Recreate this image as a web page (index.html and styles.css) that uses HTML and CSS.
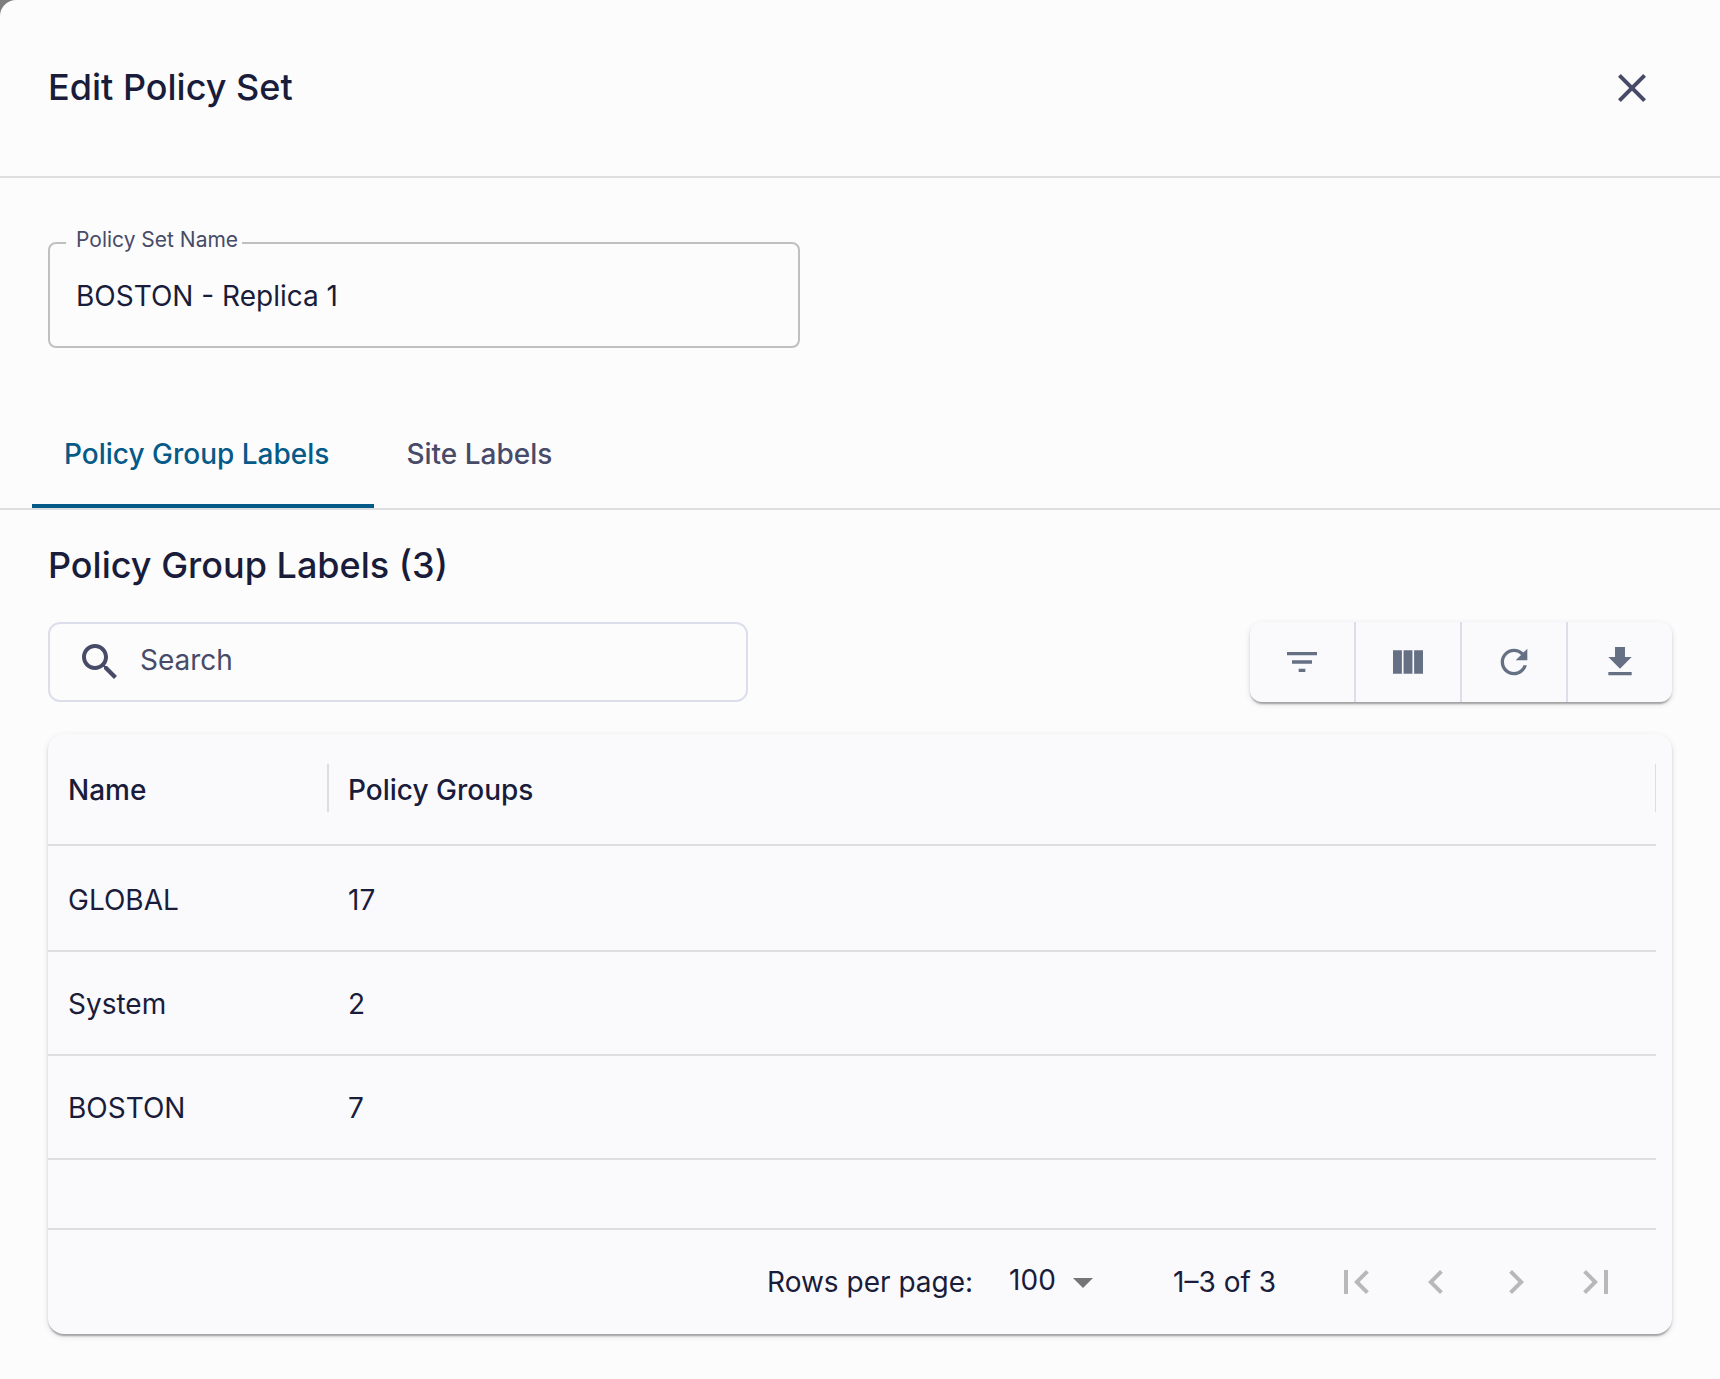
FILE: index.html
```html
<!DOCTYPE html>
<html lang="en">
<head>
<meta charset="utf-8">
<meta name="viewport" content="width=device-width, initial-scale=1">
<title>Edit Policy Set</title>
<link rel="stylesheet" href="styles.css">
</head>
<body>
<main class="panel">
  <header class="panel-header">
    <h1 class="title">Edit Policy Set</h1>
    <button class="icon-button close-button" type="button" aria-label="Close">
      <svg class="icon" viewBox="0 0 24 24"><path d="M19 6.41 17.59 5 12 10.59 6.41 5 5 6.41 10.59 12 5 17.59 6.41 19 12 13.41 17.59 19 19 17.59 13.41 12z"/></svg>
    </button>
  </header>

  <div class="form">
    <div class="field">
      <label class="field-label" for="policy-set-name">Policy Set Name</label>
      <input class="field-input" id="policy-set-name" type="text" value="BOSTON - Replica 1">
    </div>
  </div>

  <div class="tabs" role="tablist">
    <button class="tab tab-active" type="button" role="tab" aria-selected="true">Policy Group Labels</button>
    <button class="tab" type="button" role="tab" aria-selected="false">Site Labels</button>
  </div>

  <section class="content">
    <h2 class="title">Policy Group Labels (3)</h2>

    <div class="toolbar">
      <div class="search">
        <svg class="icon" viewBox="0 0 24 24"><path d="M15.5 14h-.79l-.28-.27C15.41 12.59 16 11.11 16 9.5 16 5.91 13.09 3 9.5 3S3 5.91 3 9.5 5.91 16 9.5 16c1.61 0 3.09-.59 4.23-1.57l.27.28v.79l5 4.99L20.49 19l-4.99-5zm-6 0C7.01 14 5 11.99 5 9.5S7.01 5 9.5 5 14 7.01 14 9.5 11.99 14 9.5 14z"/></svg>
        <input class="search-input" type="search" placeholder="Search" aria-label="Search">
      </div>
      <div class="actions">
        <button class="action" type="button" aria-label="Filter">
          <svg class="action-icon" viewBox="0 0 24 24"><path d="M10 18h4v-2h-4v2zM3 6v2h18V6H3zm3 7h12v-2H6v2z"/></svg>
        </button>
        <button class="action" type="button" aria-label="Columns">
          <svg class="action-icon" viewBox="0 0 24 24"><path d="M14.67 5v14H9.33V5h5.34zm1 14H21V5h-5.33v14zm-7.34 0V5H3v14h5.33z"/></svg>
        </button>
        <button class="action" type="button" aria-label="Refresh">
          <svg class="action-icon" viewBox="0 0 24 24"><path d="M17.65 6.35C16.2 4.9 14.21 4 12 4c-4.42 0-7.99 3.58-7.99 8s3.57 8 7.99 8c3.73 0 6.84-2.55 7.73-6h-2.08c-.82 2.33-3.04 4-5.65 4-3.31 0-6-2.69-6-6s2.69-6 6-6c1.66 0 3.14.69 4.22 1.78L13 11h7V4l-2.35 2.35z"/></svg>
        </button>
        <button class="action" type="button" aria-label="Download">
          <svg class="action-icon" viewBox="0 0 24 24"><path d="M19 9h-4V3H9v6H5l7 7 7-7zM5 18v2h14v-2H5z"/></svg>
        </button>
      </div>
    </div>

    <div class="card">
      <div class="grid">
        <table class="table">
          <thead>
            <tr><th class="col-name" scope="col">Name</th><th scope="col">Policy Groups</th></tr>
          </thead>
          <tbody>
            <tr><td>GLOBAL</td><td>17</td></tr>
            <tr><td>System</td><td>2</td></tr>
            <tr><td>BOSTON</td><td>7</td></tr>
          </tbody>
        </table>
      </div>
      <footer class="pagination">
        <label class="rows-label" for="rows-per-page">Rows per page:</label>
        <div class="rows">
          <select class="rows-select" id="rows-per-page">
            <option>25</option>
            <option>50</option>
            <option selected>100</option>
          </select>
          <svg class="icon rows-arrow" viewBox="0 0 24 24"><path d="m7 10 5 5 5-5z"/></svg>
        </div>
        <span class="range">1–3 of 3</span>
        <div class="pages">
          <button class="icon-button page-button" type="button" disabled aria-label="First page">
            <svg class="icon" viewBox="0 0 24 24"><path d="M18.41 16.59 13.82 12l4.59-4.59L17 6l-6 6 6 6zM6 6h2v12H6z"/></svg>
          </button>
          <button class="icon-button page-button" type="button" disabled aria-label="Previous page">
            <svg class="icon" viewBox="0 0 24 24"><path d="M15.41 7.41 14 6l-6 6 6 6 1.41-1.41L10.83 12z"/></svg>
          </button>
          <button class="icon-button page-button" type="button" disabled aria-label="Next page">
            <svg class="icon" viewBox="0 0 24 24"><path d="M10 6 8.59 7.41 13.17 12l-4.58 4.59L10 18l6-6z"/></svg>
          </button>
          <button class="icon-button page-button" type="button" disabled aria-label="Last page">
            <svg class="icon" viewBox="0 0 24 24"><path d="M5.59 7.41 10.18 12l-4.59 4.59L7 18l6-6-6-6zM16 6h2v12h-2z"/></svg>
          </button>
        </div>
      </footer>
    </div>
  </section>
</main>
</body>
</html>
```
FILE: styles.css
```css
:root {
  --ink: #191c3a;
  --muted: #484b68;
  --accent: #055a87;
  --line: #dedee0;
  --outline: #dcdeec;
  --surface: #fafafd;
  --raised: 0 4px 2px -2px rgba(0, 0, 0, .2), 0 2px 2px rgba(0, 0, 0, .14), 0 2px 6px rgba(0, 0, 0, .12);
}

*,
*::before,
*::after {
  box-sizing: border-box;
}

body {
  margin: 0;
  background: #7e7e7e;
  color: var(--ink);
  font: 400 28px/40px Inter, "Liberation Sans", sans-serif;
}

button,
input,
select {
  margin: 0;
  padding: 0;
  border: 0;
  background: none;
  color: inherit;
  font: inherit;
  outline: 0;
}

.panel {
  min-height: 100vh;
  background: #fcfcfc;
  border-top-left-radius: 16px;
}

.title {
  margin: 0;
  font-size: 36px;
  line-height: 44px;
  font-weight: 500;
}

.icon {
  display: block;
  flex: none;
  width: 48px;
  height: 48px;
  fill: currentColor;
}

.icon-button {
  padding: 16px;
}

.panel-header {
  display: flex;
  align-items: center;
  justify-content: space-between;
  padding: 48px;
  border-bottom: 2px solid var(--line);
}

.panel-header .title {
  padding-bottom: 2px;
}

.close-button {
  color: var(--muted);
}

/* Form */

.form {
  padding: 64px 48px 52px;
}

.field {
  position: relative;
  max-width: 752px;
}

.field-label {
  position: absolute;
  top: -18px;
  left: 18px;
  padding: 0 4px 0 10px;
  background: #fcfcfc;
  color: var(--muted);
  font-size: 21px;
  line-height: 32px;
}

.field-input {
  display: block;
  width: 100%;
  height: 106px;
  padding: 2px 26px 0;
  border: 2px solid #c0c0c0;
  border-radius: 8px;
}

/* Tabs */

.tabs {
  display: flex;
  padding: 0 32px;
  border-bottom: 2px solid var(--line);
}

.tab {
  height: 108px;
  padding: 0 45px 0 32px;
  color: var(--muted);
  font-weight: 500;
}

.tab-active {
  color: var(--accent);
  box-shadow: inset 0 -4px var(--accent);
}

/* List */

.content {
  padding: 33px 48px 44px;
}

.toolbar {
  display: flex;
  justify-content: space-between;
  gap: 32px;
  margin: 35px 0 32px;
}

.search {
  display: flex;
  align-items: center;
  gap: 16px;
  flex: 0 1 700px;
  height: 80px;
  padding: 0 26px;
  border: 2px solid var(--outline);
  border-radius: 12px;
  color: var(--muted);
}

.search-input {
  flex: 1;
  min-width: 0;
  padding-bottom: 4px;
  appearance: none;
}

.search-input::placeholder {
  color: inherit;
  opacity: 1;
}

.actions {
  display: flex;
  height: 80px;
  border-radius: 12px;
  background: var(--surface);
  box-shadow: var(--raised);
}

.action {
  padding: 20px 32px;
  color: #667085;
}

.action + .action {
  border-left: 2px solid var(--outline);
}

.action-icon {
  display: block;
  width: 40px;
  height: 40px;
  fill: currentColor;
}

.card {
  border-radius: 16px;
  background: var(--surface);
  box-shadow: var(--raised);
}

.grid {
  overflow: hidden;
  margin-right: 16px;
  padding-bottom: 68px;
  border-bottom: 2px solid var(--line);
}

.table {
  width: 100%;
  border-spacing: 0;
  table-layout: fixed;
}

.table th,
.table td {
  height: 104px;
  padding: 2px 20px 0;
  border-bottom: 2px solid var(--line);
  text-align: left;
}

.table th {
  position: relative;
  height: 112px;
  font-weight: 500;
}

.table th::after {
  content: "";
  position: absolute;
  top: 30px;
  right: -1px;
  z-index: 1;
  width: 2px;
  height: 48px;
  background: var(--line);
}

.table tbody tr:first-child td {
  height: 106px;
  padding-top: 4px;
}

.col-name {
  width: 280px;
}

/* Pagination */

.pagination {
  display: flex;
  align-items: center;
  justify-content: flex-end;
  height: 104px;
  padding-right: 36px;
}

.rows {
  position: relative;
  margin: 0 66px 0 36px;
}

.rows-select {
  display: block;
  width: 98px;
  height: 44px;
  padding-bottom: 4px;
  appearance: none;
}

.rows-arrow {
  position: absolute;
  top: -2px;
  right: 0;
  color: #757575;
  pointer-events: none;
}

.pages {
  display: flex;
  margin-left: 40px;
}

.page-button {
  color: #b8b8ba;
}
```
